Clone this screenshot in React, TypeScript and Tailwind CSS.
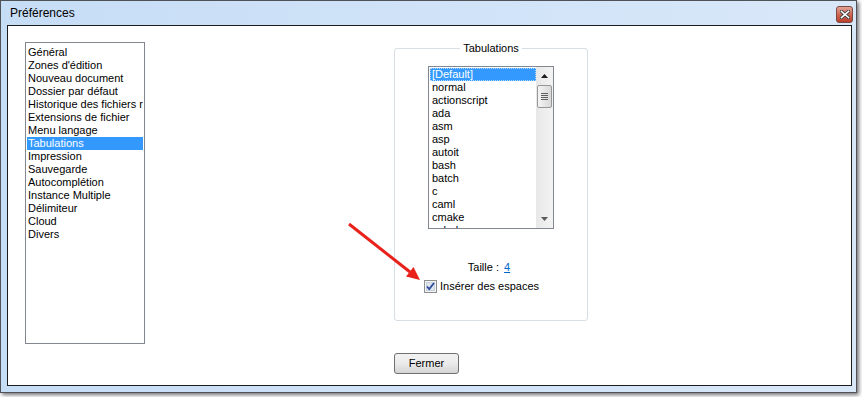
const categories = [
  "Général",
  "Zones d'édition",
  "Nouveau document",
  "Dossier par défaut",
  "Historique des fichiers récents",
  "Extensions de fichier",
  "Menu langage",
  "Tabulations",
  "Impression",
  "Sauvegarde",
  "Autocomplétion",
  "Instance Multiple",
  "Délimiteur",
  "Cloud",
  "Divers",
];

const languages = [
  "[Default]",
  "normal",
  "actionscript",
  "ada",
  "asm",
  "asp",
  "autoit",
  "bash",
  "batch",
  "c",
  "caml",
  "cmake",
  "cobol",
];

const CloseButton = () => (
  <div className="mt-[5px] mr-[3px] flex h-[17px] w-[17px] items-center justify-center rounded-[3px] border border-[#7a4a44] bg-gradient-to-b from-[#e2a497] via-[#cf6752] to-[#b8402b]">
    <svg width="10" height="9" viewBox="0 0 10 9">
      <path
        d="M1.5 1.5L8.5 7.5M8.5 1.5L1.5 7.5"
        stroke="#404040"
        strokeWidth="3.5"
        strokeLinecap="square"
      />
      <path
        d="M1.5 1.5L8.5 7.5M8.5 1.5L1.5 7.5"
        stroke="#ffffff"
        strokeWidth="1.6"
        strokeLinecap="square"
      />
    </svg>
  </div>
);

const ScrollBar = () => (
  <div className="flex h-full w-[17px] shrink-0 flex-col items-center bg-gradient-to-r from-[#e8e8e8] to-[#f3f3f3]">
    <div className="flex h-[18px] w-full items-center justify-center">
      <svg width="7" height="4" viewBox="0 0 7 4">
        <path d="M0 4L3.5 0L7 4Z" fill="#1c1c1c" />
      </svg>
    </div>
    <div className="flex h-[23px] w-[15px] flex-col items-center justify-center gap-[1px] rounded-[2px] border border-[#979797] bg-gradient-to-r from-[#f4f4f4] to-[#d9d9d9]">
      <div className="h-[1px] w-[7px] bg-[#606060]" />
      <div className="h-[1px] w-[7px] bg-[#606060]" />
      <div className="h-[1px] w-[7px] bg-[#606060]" />
      <div className="h-[1px] w-[7px] bg-[#606060]" />
    </div>
    <div className="flex-1" />
    <div className="flex h-[18px] w-full items-center justify-center">
      <svg width="7" height="4" viewBox="0 0 7 4">
        <path d="M0 0L7 0L3.5 4Z" fill="#5a5a5a" />
      </svg>
    </div>
  </div>
);

const CheckBox = () => (
  <svg width="13" height="13" viewBox="0 0 13 13" className="shrink-0">
    <rect x="0.5" y="0.5" width="12" height="12" fill="#f4f4f4" stroke="#8e8f8f" />
    <rect x="2" y="2" width="9" height="9" fill="#c9d0dc" />
    <rect x="3" y="3" width="7" height="7" fill="#dfe4ec" />
    <path
      d="M3 6.5L5.2 9L10 3"
      fill="none"
      stroke="#2a4a9e"
      strokeWidth="1.8"
    />
  </svg>
);

export default function App() {
  return (
    <div className="relative h-[397px] w-[862px] bg-white font-['Liberation_Sans',Arial,sans-serif] text-[11px] leading-[13px] text-black">
      <div className="flex h-[393px] w-[857px] flex-col border border-[#4f5256] bg-gradient-to-r from-[#c6ddf6] to-[#d9e8f9] shadow-[2px_2px_4px_rgba(0,0,0,0.55)]">
        {/* title bar */}
        <div className="flex h-[24px] shrink-0 items-start justify-between">
          <span className="ml-[9px] mt-[5px] text-[12px] leading-[15px]">Préférences</span>
          <CloseButton />
        </div>

        {/* client area */}
        <div className="mb-[6px] ml-[6px] mr-[4px] flex flex-1 flex-col border border-[#1c1c1c] bg-white pl-[17px] pt-[16px]">
          <div className="flex items-start">
            <div className="h-[302px] w-[120px] shrink-0 overflow-hidden border border-[#828790] pt-[3px]">
              {categories.map((c) => (
                <div
                  key={c}
                  className={
                    c === "Tabulations"
                      ? "mx-[1px] h-[13px] overflow-hidden whitespace-nowrap bg-[#3399ff] pl-[1px] text-white"
                      : "mx-[1px] h-[13px] overflow-hidden whitespace-nowrap pl-[1px]"
                  }
                >
                  {c}
                </div>
              ))}
            </div>

            <fieldset className="ml-[249px] h-[279px] w-[194px] rounded-[3px] border border-[#d5dfe5]">
              <legend className="mx-auto px-[3px] leading-[13px]">Tabulations</legend>
              <div className="flex flex-col items-center">
                <div className="mt-[11px] flex h-[163px] w-[126px] border border-[#828790]">
                  <div className="flex-1 overflow-hidden pt-[1px]">
                    {languages.map((l, i) => (
                      <div
                        key={l}
                        className={
                          i === 0
                            ? "ml-[1px] h-[13px] whitespace-nowrap bg-[#3399ff] pl-[2px] text-white outline-1 -outline-offset-1 outline-dotted outline-[#b5d7ff]"
                            : "ml-[1px] h-[13px] whitespace-nowrap pl-[2px]"
                        }
                      >
                        {l}
                      </div>
                    ))}
                  </div>
                  <ScrollBar />
                </div>

                <div className="mt-[32px] mr-[4px] whitespace-nowrap">
                  Taille :{" "}
                  <span className="ml-[2px] text-[#0066cc] underline">4</span>
                </div>

                <label className="mt-[6px] flex items-center gap-[3px] self-start pl-[29px]">
                  <CheckBox />
                  <span>Insérer des espaces</span>
                </label>
              </div>
            </fieldset>
          </div>

          <button className="ml-[369px] mt-[9px] h-[21px] w-[65px] rounded-[3px] border border-[#707070] bg-gradient-to-b from-[#f2f2f2] via-[#ebebeb] to-[#d4d4d4] text-[11px] text-[#000]">
            Fermer
          </button>
        </div>
      </div>

      {/* red annotation arrow */}
      <svg
        className="pointer-events-none absolute left-0 top-0"
        width="862"
        height="397"
        viewBox="0 0 862 397"
      >
        <line x1="349" y1="224" x2="410" y2="272" stroke="#e8221b" strokeWidth="3" />
        <path d="M420 280L406 276.5L413.5 267Z" fill="#e8221b" />
      </svg>
    </div>
  );
}
